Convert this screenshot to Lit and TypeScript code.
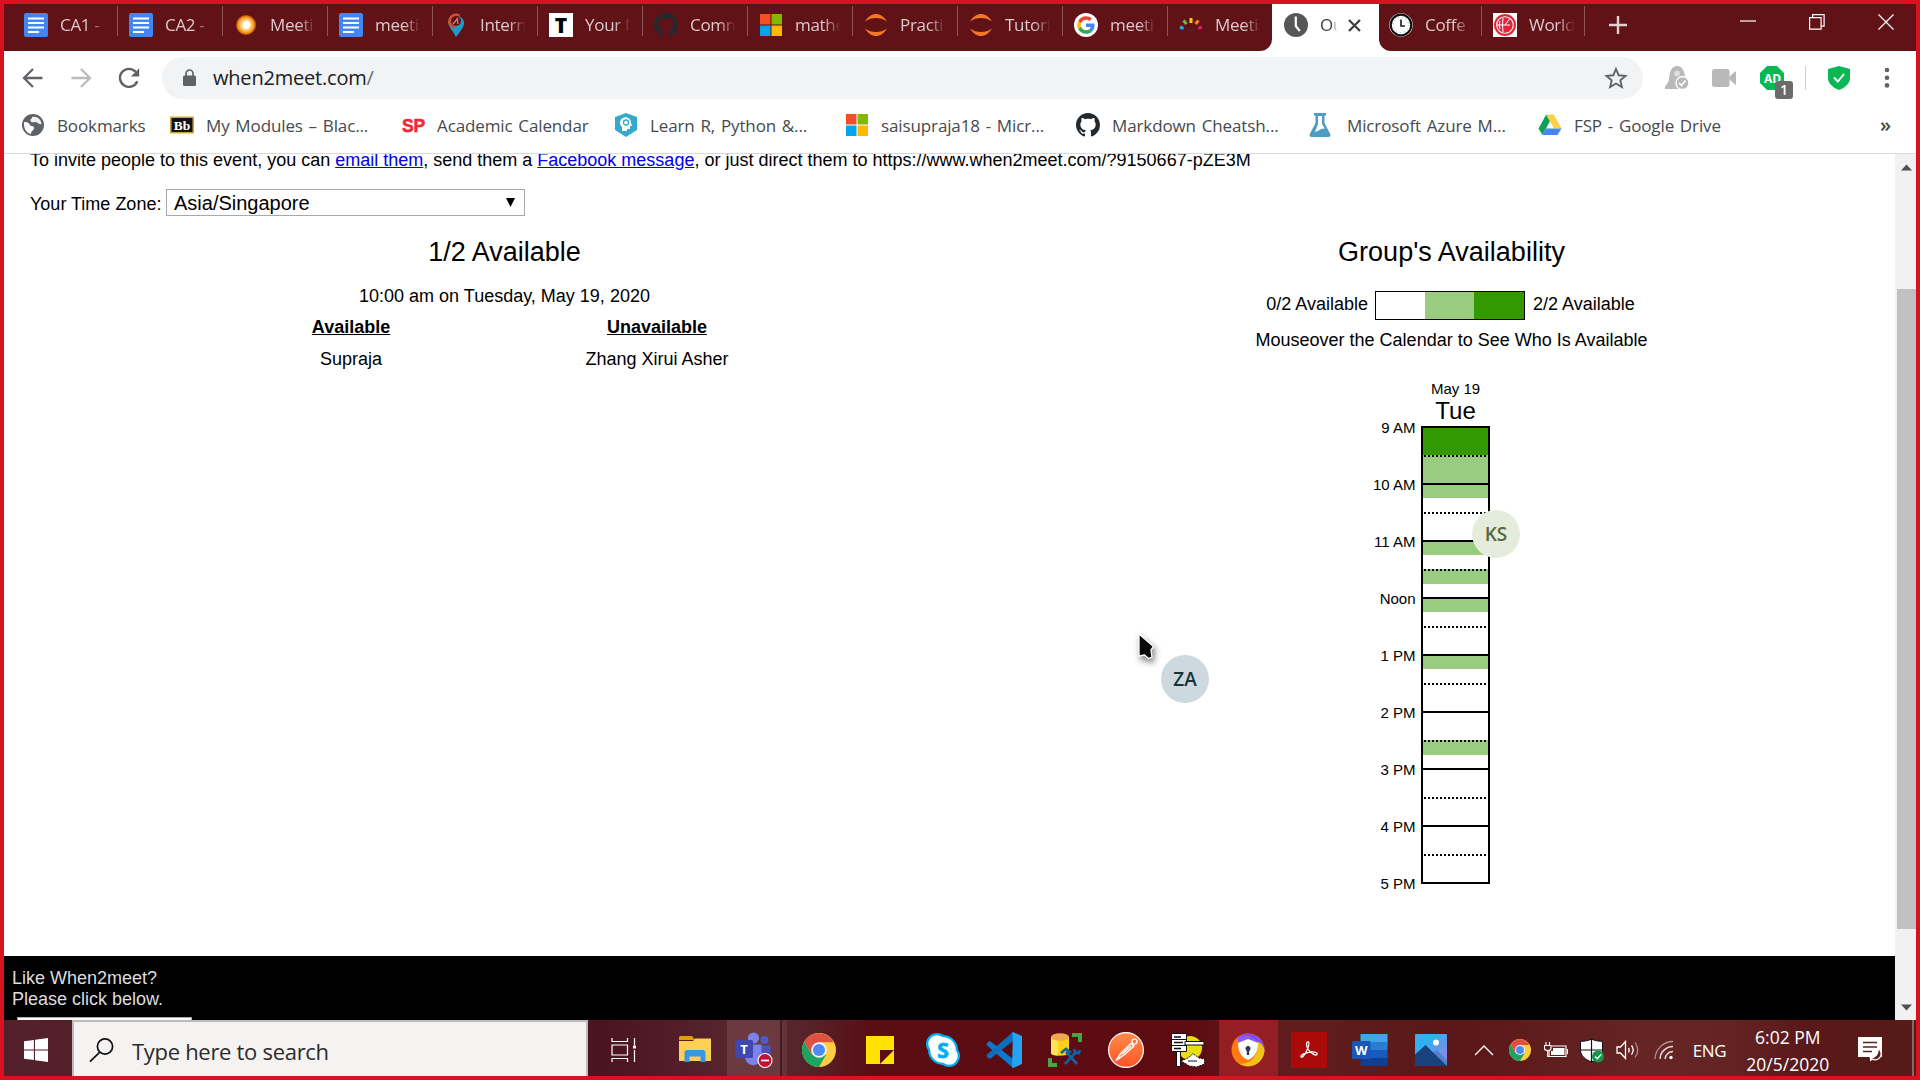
import { LitElement, html, css, svg, TemplateResult } from "lit";
import { customElement } from "lit/decorators.js";
import { classMap } from "lit/directives/class-map.js";

const icon = (w: number, h: number, box: string, body: unknown) =>
  html`<svg width=${w} height=${h} viewBox=${box} fill="none" aria-hidden="true">${body}</svg>`;

/* ---------- site icons ---------- */
const docs = () => icon(24, 24, "0 0 24 24", svg`
  <rect width="24" height="24" rx="2" fill="#4285f4"/>
  <path d="M4 5.500h16M4 10h16M4 14.500h16M4 19h11" stroke="#fff" stroke-width="2.200"/>`);
const orb = () => icon(24, 24, "0 0 24 24", svg`
  <defs><radialGradient id="orb"><stop offset="0" stop-color="#fff"/><stop offset=".35" stop-color="#ffe9bd"/><stop offset=".75" stop-color="#f9a11c"/><stop offset="1" stop-color="#b5480f"/></radialGradient></defs>
  <circle cx="12" cy="12" r="10" fill="url(#orb)"/>
  <path d="M9 10l5-3 3 5-3 4-5-1z" fill="#fff" opacity=".75"/>`);
const pin = () => icon(24, 24, "0 0 24 24", svg`
  <path d="M4 8.500a8.500 8.500 0 0 1 16 0c1 5-4 10-8 15.500C9 18 4 13 4 8.500z" fill="#1c9bc9"/>
  <path d="M4 9a8.300 8.300 0 0 1 12-7.600L10 16c-3-2-6-4-6-7z" fill="#c2543d"/>
  <circle cx="12" cy="8" r="5" fill="#611217"/><path d="M9 11l5-6M13 5l1 6" stroke="#d2826b" stroke-width="1.300"/>`);
const letterT = () => icon(24, 24, "0 0 24 24", svg`
  <rect width="24" height="24" fill="#fff"/>
  <text x="12" y="19.500" text-anchor="middle" font-family="Open Sans, sans-serif" font-weight="800" font-size="21" fill="#000">T</text>`);
const octocat = () => icon(24, 24, "0 0 16 16", svg`
  <path fill="#24292e" d="M8 0C3.580 0 0 3.580 0 8c0 3.540 2.290 6.530 5.470 7.590.4.070.55-.17.55-.38 0-.19-.01-.82-.01-1.490-2.010.37-2.530-.49-2.690-.94-.09-.23-.48-.94-.82-1.130-.28-.15-.68-.52-.01-.53.63-.01 1.080.58 1.230.82.72 1.210 1.870.87 2.330.66.07-.52.28-.87.51-1.070-1.780-.2-3.640-.89-3.640-3.950 0-.87.31-1.590.82-2.150-.08-.2-.36-1.020.08-2.120 0 0 .67-.21 2.200.82.64-.18 1.320-.27 2-.27s1.360.09 2 .27c1.530-1.040 2.200-.82 2.200-.82.44 1.100.16 1.920.08 2.120.51.56.82 1.270.82 2.150 0 3.070-1.870 3.750-3.650 3.950.29.25.54.73.54 1.480 0 1.070-.01 1.930-.01 2.200 0 .21.15.46.55.38A8.010 8.010 0 0 0 16 8c0-4.420-3.580-8-8-8z"/>`);
const msft = () => icon(24, 24, "0 0 24 24", svg`
  <path d="M1 1h10.500v10.500H1z" fill="#f25022"/><path d="M12.500 1H23v10.500H12.500z" fill="#7fba00"/>
  <path d="M1 12.500h10.500V23H1z" fill="#00a4ef"/><path d="M12.500 12.500H23V23H12.500z" fill="#ffb900"/>`);
const jupyter = () => icon(24, 24, "0 0 24 24", svg`
  <path d="M1 8.500C4 3.500 8 1 12 1s8 2.500 11 7.500C19.500 6 16 5 12 5S4.500 6 1 8.500z" fill="#f37726"/>
  <path d="M1 15.500C4.500 18 8 19 12 19s7.500-1 11-3.500C20 20.500 16 23 12 23s-8-2.500-11-7.500z" fill="#f37726"/>`);
const googleG = () => icon(24, 24, "0 0 24 24", svg`
  <circle cx="12" cy="12" r="12" fill="#fff"/>
  <g transform="translate(3.200 3.200) scale(.368)">
    <path fill="#EA4335" d="M24 9.500c3.540 0 6.710 1.220 9.210 3.600l6.850-6.850C35.900 2.380 30.470 0 24 0 14.620 0 6.510 5.380 2.560 13.220l7.980 6.190C12.430 13.720 17.740 9.500 24 9.500z"/>
    <path fill="#4285F4" d="M46.980 24.550c0-1.570-.15-3.090-.38-4.550H24v9.020h12.940c-.58 2.960-2.260 5.480-4.780 7.180l7.730 6c4.510-4.180 7.090-10.360 7.090-17.650z"/>
    <path fill="#FBBC05" d="M10.530 28.590c-.48-1.450-.76-2.990-.76-4.590s.27-3.140.76-4.590l-7.980-6.190C.92 16.460 0 20.120 0 24s.92 7.540 2.560 10.780l7.970-6.190z"/>
    <path fill="#34A853" d="M24 48c6.480 0 11.930-2.130 15.890-5.810l-7.730-6c-2.150 1.450-4.920 2.300-8.160 2.300-6.260 0-11.570-4.220-13.470-9.910l-7.980 6.190C6.510 42.620 14.620 48 24 48z"/>
  </g>`);
const rays = () => icon(24, 24, "0 0 24 24", svg`
  <g stroke-width="3"><path d="M1 14l3.500 1.500" stroke="#29a9e0"/><path d="M4.500 7.500l3 3.500" stroke="#5bbf4a"/>
  <path d="M12 5v5" stroke="#f9c80e"/><path d="M19.500 7.500l-3 3.500" stroke="#f58220"/><path d="M23 14l-3.500 1.500" stroke="#e8175d"/></g>
  <path d="M10 16l2 2 2-2" stroke="#43302a" stroke-width="1.200"/>`);
const clockSolid = () => icon(24, 24, "0 0 24 24", svg`
  <circle cx="12" cy="12" r="12" fill="#555759"/><path d="M11.800 3.500V13l4 5" stroke="#fff" stroke-width="2.200"/>`);
const clockRing = () => icon(24, 24, "0 0 24 24", svg`
  <circle cx="12" cy="12" r="11.800" fill="#fff"/><circle cx="12" cy="12" r="10.300" stroke="#111" stroke-width="2.200"/>
  <circle cx="12" cy="12" r="7.500" stroke="#999" stroke-width="1" stroke-dasharray="1 3"/><path d="M12 6.500V13h4" stroke="#222" stroke-width="1.700"/>`);
const worldClock = () => icon(24, 24, "0 0 24 24", svg`
  <rect width="24" height="24" fill="#fff"/><circle cx="12" cy="12" r="11" fill="#e2253b"/>
  <circle cx="12" cy="12" r="8.300" stroke="#fff" stroke-width="1.100"/><path d="M12 12l4.500-6M12 12h5M7 8q-1.500 4 0 8M10 5q-1 7 0 14M4 12h8" stroke="#fff" stroke-width="1"/>`);
const globe = () => icon(24, 24, "0 0 24 24", svg`
  <circle cx="12" cy="12" r="11" fill="#5f6368"/>
  <path d="M3 9c4 0 5 1 6 3s4 0 4 3-3 2-3 6C5 20 2.500 15 3 9z" fill="#fff"/><path d="M11 4c5-1 9 2 9.500 7-3 1-4-2-6-2s-4 1-5-1 2-2 1.500-4z" fill="#fff" opacity=".9"/>`);
const bb = () => icon(24, 24, "0 0 24 24", svg`
  <rect x=".8" y="4.300" width="22.400" height="15.400" fill="#111" stroke="#caa33a" stroke-width="1.500"/>
  <text x="12" y="16.800" text-anchor="middle" font-family="Liberation Serif, serif" font-weight="700" font-size="13.500" fill="#fff">Bb</text>`);
const sp = () => icon(24, 24, "0 0 24 24", svg`
  <text x="12.500" y="18.500" text-anchor="middle" font-family="Liberation Sans, sans-serif" font-weight="700" font-size="18" textLength="23" lengthAdjust="spacingAndGlyphs" fill="#ee2a3b" stroke="#ee2a3b" stroke-width=".6">SP</text>`);
const hexHead = () => icon(24, 24, "0 0 24 24", svg`
  <path d="M12 0l11 4v13l-11 7L1 17V4z" fill="#33aacd"/>
  <path d="M8 18v-4a5.500 5.500 0 1 1 9-4l1 3h-2v3h-3v2z" fill="#fff"/><circle cx="12" cy="9.500" r="2.500" stroke="#33aacd" stroke-width="1.300"/>`);
const flask = () => icon(28, 24, "0 0 28 24", svg`
  <path d="M7 0h12v2.500h-1.500V10L23.500 21.500q0 2.500-2 2.500H4.500q-2 0-2-2.500L8.500 10V2.500H7z" fill="#4c9cc4"/>
  <path d="M11 3h4v8l3 5c-3-2-6 2-10 3l3-8z" fill="#fff"/>`);
const drive = () => icon(24, 24, "0 0 24 24", svg`
  <path d="M8.200 1.500L12 8 4.500 22 .5 15.500z" fill="#11a05b"/><path d="M8.200 1.500h7.600L23.500 15.500H16z" fill="#ffcf48"/>
  <path d="M8 15.500h15.500L19.500 22h-15z" fill="#4486f4"/>`);

/* ---------- toolbar icons ---------- */
const arrow = (color: string, flip: boolean) => icon(24, 24, "0 0 24 24", svg`
  <g transform=${flip ? "translate(24 0) scale(-1 1)" : ""}><path d="M21.500 12H3.500M12 3L3 12l9 9" stroke=${color} stroke-width="2.300"/></g>`);
const reload = () => icon(24, 24, "0 0 24 24", svg`
  <path d="M20.300 15.300A9 9 0 1 1 18.800 6" stroke="#5f6368" stroke-width="2.400"/><path d="M22.200 2.200v8.300h-8.300z" fill="#5f6368"/>`);
const lock = () => icon(13, 18, "0 0 13 18", svg`
  <path d="M3 7V4.500a3.500 3.500 0 0 1 7 0V7" stroke="#5f6368" stroke-width="1.700"/><rect y="6.500" width="13" height="10.500" rx="1.500" fill="#5f6368"/>`);
const star = () => icon(24, 24, "0 0 24 24", svg`
  <path d="M12 3l2.700 6.300 6.800.6-5.200 4.500 1.600 6.700L12 17.500l-5.900 3.600 1.600-6.700-5.200-4.500 6.800-.6z" stroke="#5f6368" stroke-width="1.900"/>`);
const bellMuted = () => icon(26, 26, "0 0 26 26", svg`
  <path d="M1 22.500c0-3 3-3 4-8C5.500 6 8 1 13 1s7.500 5 8 10l-4 13H1z" fill="#b9b9b9"/><circle cx="13" cy="8.500" r="3" fill="#fff" opacity=".5"/>
  <circle cx="18.500" cy="18" r="6.500" fill="#b9b9b9" stroke="#fff" stroke-width="1.300"/><path d="M15 18l2.500 2.500 4-5" stroke="#fff" stroke-width="1.600"/>`);
const camera = () => icon(24, 20, "0 0 24 20", svg`
  <rect y="1" width="17.500" height="18" rx="2.500" fill="#b9b9b9"/><path d="M17 9l6-5.500h1v13h-1L17 11z" fill="#b9b9b9"/>`);
const abp = () => icon(24, 24, "0 0 24 24", svg`
  <path d="M7 0h10l7 7v10l-7 7H7l-7-7V7z" fill="#0bb753"/>
  <text x="12.500" y="16.500" text-anchor="middle" font-family="Open Sans, sans-serif" font-weight="700" font-size="12" fill="#fff">AD</text>`);
const shield = () => icon(22, 24, "0 0 22 24", svg`
  <path d="M11 0l11 3v9c0 6-6 10-11 12C6 22 0 18 0 12V3z" fill="#0bb753"/><path d="M6 11.500l3.800 4L16 8" stroke="#fff" stroke-width="1.900"/>`);
const dots = () => icon(6, 22, "0 0 6 22", svg`
  <g fill="#5f6368"><circle cx="3" cy="3" r="2.300"/><circle cx="3" cy="10.700" r="2.300"/><circle cx="3" cy="18.400" r="2.300"/></g>`);

/* ---------- taskbar icons ---------- */
const windowsLogo = () => icon(24, 24, "0 0 24 24", svg`
  <path d="M0 3.300L9.900 2v9.400H0zM11 1.800L24 0v11.400H11zM0 12.600h9.900V22L0 20.700zM11 12.600h13V24l-13-1.800z" fill="#fff"/>`);
const magnifier = () => icon(25, 24, "0 0 25 24", svg`
  <circle cx="16" cy="8.500" r="7.600" stroke="#111" stroke-width="1.700"/><path d="M10.800 14.200L1 23.600" stroke="#111" stroke-width="1.700"/>`);
const taskView = () => icon(26, 24, "0 0 26 24", svg`
  <path d="M1 0v3.500h15.500V0M1 24v-3.500h15.500V24M1 7h15.500v10H1zM23.500 0v7M23.500 12v12" stroke="#fff" stroke-width="1.200"/><rect x="22" y="7.500" width="3" height="3" fill="#fff"/>`);
const folder = () => icon(32, 28, "0 0 32 28", svg`
  <path d="M0 1.500Q0 0 1.500 0H13l3 4H0z" fill="#e0a000"/><path d="M0 5h14l2-2.500h16V25H0z" fill="#fdcf55"/>
  <path d="M5.500 26V17q0-3 3-3h15q3 0 3 3v9h-5v-5.500H10.500V26z" fill="#3a96dd"/>`);
const teams = () => icon(38, 36, "0 0 38 36", svg`
  <circle cx="29.500" cy="8" r="4" fill="#5059c9"/><path d="M24 13.500h11.500V23a6 6 0 0 1-6 6H24z" fill="#4b53bc"/>
  <circle cx="18.500" cy="6" r="5.600" fill="#7b83eb"/><path d="M10 12.500h16.500V25a8.200 8.200 0 0 1-16.500 0z" fill="#7b83eb"/>
  <rect y="8" width="18" height="18" rx="1.500" fill="#4048b0"/>
  <text x="9" y="21.500" text-anchor="middle" font-family="Open Sans, sans-serif" font-weight="700" font-size="13" fill="#fff">T</text>
  <circle cx="30" cy="28.500" r="7" fill="#c50f35" stroke="#fff" stroke-width="1.100"/><path d="M26 28.500h8" stroke="#fff" stroke-width="1.700"/>`);
const chrome = (s: number) => icon(s, s, "0 0 48 48", svg`
  <circle cx="24" cy="24" r="24" fill="#ffcd40"/>
  <path d="M3.200 12A24 24 0 0 0 24 48l10.400-18L24 33 13.600 30z" fill="#1da362"/>
  <path d="M3.200 12L13.600 30 24 24V13h20.800A24 24 0 0 0 3.200 12z" fill="#dd5144"/>
  <circle cx="24" cy="24" r="11" fill="#f4f4f4"/><circle cx="24" cy="24" r="8.600" fill="#4c8bf5"/>`);
const sticky = () => icon(28, 28, "0 0 28 28", svg`
  <path d="M0 0h28v14H14v14H0z" fill="#ffe300"/><path d="M14 28L28 14v14z" fill="#ffe300"/>`);
const skype = () => icon(34, 34, "0 0 34 34", svg`
  <circle cx="11" cy="11" r="11" fill="#00aff0"/><circle cx="23" cy="23" r="11" fill="#00aff0"/><circle cx="17" cy="17" r="15" fill="#00aff0"/>
  <circle cx="11" cy="11" r="8.700" fill="#fff"/><circle cx="23" cy="23" r="8.700" fill="#fff"/><circle cx="17" cy="17" r="12.800" fill="#fff"/>
  <text x="17" y="24.500" text-anchor="middle" font-family="Open Sans, sans-serif" font-weight="700" font-size="21" fill="#00aff0" stroke="#00aff0" stroke-width=".8">S</text>`);
const vscode = () => icon(36, 36, "0 0 36 36", svg`
  <path d="M1 11l3-2 23 18v9L.5 13z" fill="#0b79cc"/><path d="M1 25l3 2 23-18V0L.5 23z" fill="#0a70bd"/>
  <path d="M27 0l9 4v28l-9 4-1-1z" fill="#25a3f3"/><path d="M27 0l-1.500 1L27 9z" fill="#1587d4"/>`);
const database = () => icon(34, 34, "0 0 34 34", svg`
  <path d="M3 4v16c0 3.500 18 3.500 18 0V4z" fill="#fcd116"/><path d="M3 4v16c0 1.500 3 2.500 7 2.600V4z" fill="#ffe25c"/><ellipse cx="12" cy="4" rx="9" ry="3.800" fill="#f0a64e"/>
  <path d="M24 0h10v9h-4V4h-6z" fill="#46a546"/><path d="M0 25h4v5h5v4H0z" fill="#46a546"/>
  <path d="M17 31l12-13M18 19l11 12M13 20l5-4 4 3-3 3M26 16l1 4h4l1-3" stroke="#0e62a8" stroke-width="2.600"/>`);
const postman = () => icon(36, 36, "0 0 36 36", svg`
  <defs><linearGradient id="pm" x2="0" y2="1"><stop stop-color="#ff8b48"/><stop offset="1" stop-color="#ff5428"/></linearGradient></defs>
  <circle cx="18" cy="18" r="17.400" fill="url(#pm)" stroke="#fff" stroke-width="1.200"/>
  <path d="M13 21l10-9.500 3 2.500-10 9-8 5.500z" fill="#ff8a60" stroke="#fff" stroke-width="1.400"/><path d="M14 22l9-8" stroke="#fff" stroke-width="1.200"/><circle cx="26.500" cy="9.500" r="2.500" stroke="#fff" stroke-width="1.200"/>`);
const flowchart = () => icon(34, 34, "0 0 34 34", svg`
  <circle cx="19" cy="15" r="12" fill="#e6df12"/>
  <path d="M.5.5h15v18H.5zM.5 6.500h15M.5 12.500h15" fill="#fff" stroke="#111"/><path d="M3 4h7M3 9.500h9M3 15.500h7" stroke="#111" stroke-width="1.400"/>
  <path d="M14 8.500h19v3.500H14zM5.500 18.500h4V33.500h-4z" fill="#fff" stroke="#111"/><path d="M10 28l7-3 5-4.500 6 4.500 5.500 1v5l-8 3-7-1z" fill="#fff" stroke="#111" stroke-dasharray="2 1"/><path d="M17 28h9" stroke="#111"/>`);
const vault = () => icon(34, 34, "0 0 34 34", svg`
  <circle cx="17" cy="17" r="16.500" fill="#ff7b12"/><path d="M6 5a16.500 16.500 0 0 1 27.500 13L27 9 17 3z" fill="#7b4dff"/>
  <path d="M33.500 18A16.500 16.500 0 0 1 8 30.500C20 32 27 24 27 9c4 1 6 5 6.500 9z" fill="#f0c419"/><path d="M6 5c4-3 15-2 21 4l-19 1z" fill="#8d5cff"/>
  <path d="M17 6l10 4c0 8-3 14-10 17C10 24 7 18 7 10z" fill="#fff"/><circle cx="17" cy="15.500" r="2.500" fill="#2b3a55"/><path d="M17 15v7" stroke="#2b3a55" stroke-width="2.400"/>`);
const acrobat = () => icon(36, 36, "0 0 36 36", svg`
  <rect width="36" height="36" fill="#a90a0a"/>
  <path d="M10 24.500c0-2 6-4 10-4.500s7 1 6 2.500-6-.5-9-5.500-1-8 .5-7-1 8-3.500 12-4 3.500-4 2.500z" stroke="#fff" stroke-width="1.300"/>`);
const word = () => icon(36, 32, "0 0 36 32", svg`
  <rect x="8.500" width="27" height="9" fill="#41a5ee"/><rect x="8.500" y="8" width="27" height="8" fill="#2b7cd3"/><rect x="8.500" y="16" width="27" height="8" fill="#185abd"/><rect x="8.500" y="24" width="27" height="8" fill="#103f91"/>
  <rect y="7" width="18.500" height="18" rx="1.500" fill="#1a56b8"/>
  <text x="9.200" y="20.800" text-anchor="middle" font-family="Open Sans, sans-serif" font-weight="700" font-size="13" fill="#fff">W</text>`);
const photos = () => icon(32, 32, "0 0 32 32", svg`
  <defs><linearGradient id="sky" x2="1" y2="1"><stop offset=".3" stop-color="#2fb0f3"/><stop offset="1" stop-color="#a57be0"/></linearGradient></defs>
  <rect width="32" height="32" rx="1" fill="url(#sky)"/><path d="M14 32V24l7.500-8.500L32 26v6z" fill="#5580cf"/><path d="M0 20.500L10.500 11 32 32H0z" fill="#17427c"/><circle cx="21" cy="8.500" r="3" fill="#fff"/>`);

/* ---------- tray icons ---------- */
const chevronUp = () => icon(20, 12, "0 0 20 12", svg`<path d="M1 11l9-9 9 9" stroke="#fff" stroke-width="1.400"/>`);
const battery = () => icon(24, 18, "0 0 24 18", svg`
  <path d="M7.500 5H22V15.500H5v-6" stroke="#fff" stroke-width="1.200"/><path d="M9 7h11.500v7H7V10h2z" fill="#fff"/><path d="M23.500 8v5" stroke="#fff"/>
  <path d="M2 1v3M5.500 1v3M.5 4.500h6.500v3q0 2-3.200 2t-3.300-2zM3.700 9.500V15.500H6" stroke="#fff" stroke-width="1.100"/>`);
const defender = () => icon(24, 25, "0 0 24 25", svg`
  <path d="M11.500 1c3 1.700 7 2.300 11 2.300V12c0 6-5 9.500-11 12C5.500 21.500.5 18 .5 12V3.300C4.500 3.300 8.500 2.700 11.500 1z" fill="#fff" stroke="#111"/>
  <path d="M11.500 1v23M1 12h21.500" stroke="#111" stroke-width="1.200"/><circle cx="18" cy="18.500" r="6" fill="#15944a"/><path d="M15 18.500l2.300 2.300 4-4.500" stroke="#fff" stroke-width="1.300"/>`);
const speaker = () => icon(24, 20, "0 0 24 20", svg`
  <path d="M1 7h3.500l5-5.500v17L4.500 13H1z" stroke="#fff" stroke-width="1.300"/><path d="M12.500 8q1.500 2 0 4.500M15.500 5.500q3.500 4.500 0 9" stroke="#fff" stroke-width="1.300"/><path d="M19 2.500q5.500 7.500 0 15" stroke="#fff" stroke-width="1.200" opacity=".5"/>`);
const wifi = () => icon(20, 20, "0 0 20 20", svg`
  <path d="M1 19A18 18 0 0 1 19 1.500" stroke="#fff" stroke-width="1.300" opacity=".5"/><path d="M6 19A13 13 0 0 1 19 6.500M11 19a8 8 0 0 1 8-7.500" stroke="#fff" stroke-width="1.400" opacity=".85"/><circle cx="17" cy="17.500" r="1.700" fill="#fff"/>`);
const notification = () => icon(26, 26, "0 0 26 26", svg`
  <path d="M0 0h24v20h-6l-6 4.500V20H0z" fill="#fff"/><path d="M5 5.500h14M5 10h14M5 14.500h9" stroke="#5e2020" stroke-width="1.400"/>
  <path d="M20 11.500a6 6 0 1 1-7.500 9c4 .5 8-3 7.500-9z" fill="#5e2020" stroke="#fff" stroke-width="1.300"/>`);

interface Tab { icon: () => TemplateResult; title: string }
const TABS: Tab[] = [
  { icon: docs, title: "CA1 -" }, { icon: docs, title: "CA2 -" }, { icon: orb, title: "Meeti" },
  { icon: docs, title: "meeti" }, { icon: pin, title: "Intern" }, { icon: letterT, title: "Your N" },
  { icon: octocat, title: "Comm" }, { icon: msft, title: "mathe" }, { icon: jupyter, title: "Practi" },
  { icon: jupyter, title: "Tutori" }, { icon: googleG, title: "meeti" }, { icon: rays, title: "Meeti" },
];
const RIGHT_TABS: Tab[] = [{ icon: clockRing, title: "Coffe" }, { icon: worldClock, title: "World" }];
const BOOKMARKS: Tab[] = [
  { icon: globe, title: "Bookmarks" }, { icon: bb, title: "My Modules – Blac..." }, { icon: sp, title: "Academic Calendar" },
  { icon: hexHead, title: "Learn R, Python &..." }, { icon: msft, title: "saisupraja18 - Micr..." },
  { icon: octocat, title: "Markdown Cheatsh..." }, { icon: flask, title: "Microsoft Azure M..." }, { icon: drive, title: "FSP - Google Drive" },
];
/* People available in each quarter hour, one row per hour. */
const HOURS: { label: string; slots: number[] }[] = [
  { label: "9 AM", slots: [2, 2, 1, 1] }, { label: "10 AM", slots: [1, 0, 0, 0] }, { label: "11 AM", slots: [1, 0, 1, 0] },
  { label: "Noon", slots: [1, 0, 0, 0] }, { label: "1 PM", slots: [1, 0, 0, 0] }, { label: "2 PM", slots: [0, 0, 1, 0] },
  { label: "3 PM", slots: [0, 0, 0, 0] }, { label: "4 PM", slots: [0, 0, 0, 0] },
];
const APPS = [() => chrome(34), sticky, skype, vscode, database, postman, flowchart, vault, acrobat, word, photos];

@customElement("browser-chrome")
class BrowserChrome extends LitElement {
  static styles = css`
    :host { display: block; font-family: "Open Sans", "Noto Sans", sans-serif; }
    svg { display: block; flex: none; }
    .strip { display: flex; height: 47px; background: #fff; }
    .group { display: flex; background: #611217; color: #d9cbcc; }
    .left { width: 1268px; padding-left: 9px; box-sizing: border-box; border-bottom-right-radius: 12px; }
    .right { flex: 1; border-bottom-left-radius: 12px; }
    .tab { display: flex; flex: none; width: 105px; height: 47px; padding: 9px 0 0 11px; box-sizing: border-box; gap: 12px; position: relative; }
    .left .tab:last-child { width: 104px; }
    .right .tab { width: 103px; padding-left: 10px; }
    .right .tab + .tab { padding-left: 11px; }
    .tab::after { content: ""; position: absolute; right: 0; top: 2px; width: 1px; height: 30px; background: #8d5457; }
    .left .tab:last-child::after { display: none; }
    .name { width: 47px; overflow: hidden; white-space: nowrap; font-size: 17px; line-height: 24px; letter-spacing: -.3px;
      -webkit-mask-image: linear-gradient(90deg, #000 62%, transparent 97%); mask-image: linear-gradient(90deg, #000 62%, transparent 97%); }
    .active { width: 107px; display: flex; padding: 9px 0 0 12px; box-sizing: border-box; gap: 12px; color: #3c4043; }
    .active .name { width: 18px; }
    .cross { margin: 6px 0 0 -2px; }
    .plus { margin: 12px 0 0 24px; }
    .winbtns { display: flex; margin-left: auto; gap: 53px; padding: 10px 22px 0 0; }
    .bar { display: flex; align-items: center; height: 54px; padding-left: 17px; box-sizing: border-box; }
    .nav { display: flex; gap: 24px; }
    .pill { display: flex; align-items: center; width: 1481px; height: 42px; margin-left: 21px; border-radius: 21px; background: #f1f3f4; padding: 0 15px 0 21px; box-sizing: border-box; }
    .url { margin-left: 17px; font-size: 20px; line-height: 42px; letter-spacing: -.2px; color: #202124; flex: 1; }
    .slash { color: #6b6f73; }
    .ext { display: flex; align-items: center; margin-left: 21px; flex: 1; }
    .cam { margin-left: 22px; }
    .abp { margin-left: 24px; position: relative; }
    .badge { position: absolute; left: 15px; top: 15px; width: 18px; height: 18px; border-radius: 3px; background: #6b6b6b; color: #fff; font: 600 14px/18px "Open Sans", sans-serif; text-align: center; }
    .sep { width: 1px; height: 24px; background: #ccced1; margin-left: 21px; }
    .shield { margin-left: 22px; }
    .dots { margin-left: 34px; }
    .marks { display: grid; grid-template-columns: 149px 231px 213px 231px 231px 231px 231px 342px 20px; height: 49px; padding-left: 17px; align-items: center; border-bottom: 1px solid #d8dadc; box-sizing: border-box; padding-bottom: 8px; font-size: 17px; color: #46494d; }
    .mark { display: flex; align-items: center; gap: 12px; white-space: nowrap; letter-spacing: -.12px; word-spacing: 1.500px; }
    .more { font-size: 20px; line-height: 20px; font-weight: 600; }
  `;
  private tab(t: Tab) {
    return html`<div class="tab">${t.icon()}<span class="name">${t.title}</span></div>`;
  }
  render() {
    return html`
      <div class="strip">
        <div class="group left">${TABS.map((t) => this.tab(t))}</div>
        <div class="active">${clockSolid()}<span class="name">Ou</span>
          <svg class="cross" width="13" height="13" viewBox="0 0 13 13"><path d="M1 1l11 11M12 1L1 12" stroke="#3c4043" stroke-width="2.300"/></svg>
        </div>
        <div class="group right">
          ${RIGHT_TABS.map((t) => this.tab(t))}
          <svg class="plus" width="18" height="18" viewBox="0 0 18 18"><path d="M9 0v18M0 9h18" stroke="#e0d2d3" stroke-width="2.400"/></svg>
          <div class="winbtns">
            ${icon(16, 16, "0 0 16 16", svg`<path d="M0 7h16" stroke="#fff" stroke-width="1.200"/>`)}
            ${icon(16, 16, "0 0 16 16", svg`<path d="M.6 3.600h11.500v11.500H.6zM3.600 3.600V.6h11.500v11.500h-3" stroke="#fff" stroke-width="1.200"/>`)}
            ${icon(16, 16, "0 0 16 16", svg`<path d="M.5.5l15 15M15.500.5l-15 15" stroke="#fff" stroke-width="1.200"/>`)}
          </div>
        </div>
      </div>
      <div class="bar">
        <div class="nav">${arrow("#5f6368", false)}${arrow("#babcbe", true)}${reload()}</div>
        <div class="pill">${lock()}<span class="url">when2meet.com<span class="slash">/</span></span>${star()}</div>
        <div class="ext">
          ${bellMuted()}
          <div class="cam">${camera()}</div>
          <div class="abp">${abp()}<span class="badge">1</span></div>
          <div class="sep"></div>
          <div class="shield">${shield()}</div>
          <div class="dots">${dots()}</div>
        </div>
      </div>
      <div class="marks">
        ${BOOKMARKS.map((b) => html`<div class="mark">${b.icon()}<span>${b.title}</span></div>`)}
        <span class="more">»</span>
      </div>`;
  }
}

@customElement("meet-page")
class MeetPage extends LitElement {
  static styles = css`
    :host { display: flex; height: 866px; overflow: hidden; font: 18px/20px "Liberation Sans", Arial, sans-serif; color: #000; background: #fff; }
    .doc { width: 1891px; overflow: hidden; display: flex; flex-direction: column; }
    .body { height: 802px; flex: none; padding-left: 26px; box-sizing: border-box; overflow: hidden; }
    .invite { margin-top: -4px; white-space: nowrap; }
    a { color: #0000ee; text-decoration: underline; }
    .zone { display: flex; margin-top: 19px; height: 27px; }
    .zone label { padding-top: 5px; width: 136px; white-space: nowrap; }
    .select { width: 359px; height: 27px; border: 1px solid #a9a9a9; box-sizing: border-box; display: flex; justify-content: space-between; font-size: 20px; line-height: 26px; padding: 0 9px 0 7px; }
    .tri { margin-top: 8px; width: 9px; height: 9px; }
    .cols { display: grid; grid-template-columns: 947px 947px; width: 1894px; margin: 21px 0 0 1px; text-align: center; }
    h2 { margin: 0; font-weight: 400; font-size: 27px; line-height: 30px; }
    .date { margin-top: 19px; }
    .who { display: grid; grid-template-columns: 306px 306px; justify-content: center; row-gap: 12px; margin: 11px 1px 0 0; }
    .who b { text-decoration: underline; }
    .legend { display: flex; justify-content: center; gap: 8px; margin: 24px 2px 0 0; height: 29px; }
    .legend span { line-height: 26px; }
    .legend span:first-child { margin-right: -1px; }
    .scale { width: 150px; height: 29px; border: 1px solid #000; box-sizing: border-box; display: grid; grid-template-columns: 49px 49px 50px; }
    .hint { margin-top: 10px; }
    .cal { display: grid; grid-template-columns: 437.500px 69px; column-gap: 5.500px; margin-top: 30px; }
    .head { grid-column: 2; height: 46px; white-space: nowrap; }
    .day { font-size: 15px; line-height: 18px; }
    .dow { font-size: 24px; line-height: 26px; }
    .labels { text-align: right; font-size: 15px; line-height: 18px; margin-top: -7px; }
    .labels div { height: 57px; }
    .grid { border: solid #000; border-width: 0 2px 2px; height: 458px; box-sizing: border-box; }
    .hour { display: grid; height: 57px; grid-template-rows: 13px 14px 15px 13px; border-top: 2px solid #000; box-sizing: border-box; }
    .half { background-image: linear-gradient(90deg, transparent 1px, #000 1px, #000 3px, transparent 3px); background-size: 4px 2px; background-repeat: repeat-x; }
    .one { background-color: #99cc80; }
    .two { background-color: #339900; }
    .foot { height: 64px; background: #000; color: #ddd; padding: 12px 0 0 8px; box-sizing: border-box; line-height: 21px; }
    .button { width: 175px; height: 20px; margin: 7px 0 0 5px; background: #fff; border: 1px solid #aaa; box-sizing: border-box; }
    .scroll { width: 21px; background: #f1f1f1; display: flex; flex-direction: column; align-items: center; box-sizing: border-box; padding-left: 2px; }
    .thumb { width: 19px; height: 640px; margin-top: 118px; background: #c1c1c1; }
    .up { margin-top: 10px; width: 11px; height: 7px; }
    .down { margin: auto 0 9px; width: 11px; height: 7px; }
    svg { display: block; }
  `;
  render() {
    const fill = (n: number, half: boolean) => classMap({ one: n === 1, two: n === 2, half });
    return html`
      <div class="doc">
        <div class="body">
          <div class="invite">To invite people to this event, you can <a>email them</a>, send them a <a>Facebook message</a>, or just direct them to https://www.when2meet.com/?9150667-pZE3M</div>
          <div class="zone"><label>Your Time Zone:</label>
            <div class="select">Asia/Singapore<svg class="tri" viewBox="0 0 10 10"><path d="M0 0h10L5 10z"/></svg></div>
          </div>
          <div class="cols">
            <section>
              <h2>1/2 Available</h2>
              <div class="date">10:00 am on Tuesday, May 19, 2020</div>
              <div class="who"><b>Available</b><b>Unavailable</b><span>Supraja</span><span>Zhang Xirui Asher</span></div>
            </section>
            <section>
              <h2>Group's Availability</h2>
              <div class="legend"><span>0/2 Available</span>
                <div class="scale"><i></i><i class="one"></i><i class="two"></i></div>
                <span>2/2 Available</span></div>
              <div class="hint">Mouseover the Calendar to See Who Is Available</div>
              <div class="cal">
                <div class="head"><div class="day">May 19</div><div class="dow">Tue</div></div>
                <div class="labels">${HOURS.map((h) => html`<div>${h.label}</div>`)}<div>5 PM</div></div>
                <div class="grid">${HOURS.map((h) => html`<div class="hour">${h.slots.map((n, i) => html`<i class=${fill(n, i === 2)}></i>`)}</div>`)}</div>
              </div>
            </section>
          </div>
        </div>
        <div class="foot">Like When2meet?<br />Please click below.<div class="button"></div></div>
      </div>
      <div class="scroll">
        <svg class="up" viewBox="0 0 11 7"><path d="M0 6.500L5.500.5l5.500 6z" fill="#505050"/></svg>
        <div class="thumb"></div>
        <svg class="down" viewBox="0 0 11 7"><path d="M0 .5L5.500 6.500l5.500-6z" fill="#505050"/></svg>
      </div>`;
  }
}

@customElement("task-bar")
class TaskBar extends LitElement {
  static styles = css`
    :host { display: flex; height: 56px; font-family: "Open Sans", "Noto Sans", sans-serif; color: #fff;
      background: linear-gradient(90deg, #54202b 0, #4e1824 500px, #4a1420 600px, #592630 740px, #562429 800px, #5a0d13 870px, #5d0b11 1180px, #601d1e 1290px, #5c1a1b 1380px, #5c1718 1460px, #652524 1640px, #642424 1720px, #5a181a 1800px, #551b17 1912px); }
    svg { display: block; flex: none; }
    .start { width: 68px; padding: 18px 0 0 20px; box-sizing: border-box; }
    .search { width: 516px; border: 2px solid #bfbbbb; border-bottom: 0; background: #f5f2f2; box-sizing: border-box; display: flex; padding: 16px 0 0 15px; gap: 18px; }
    .search span { font-size: 22px; line-height: 30px; margin-top: -2px; letter-spacing: -.3px; color: #2b2b2b; }
    .apps { display: grid; grid-template-columns: 72px 67px 53px 8px repeat(11, 61.25px); }
    .app { display: flex; align-items: center; justify-content: center; padding-top: 4px; }
    .folder { padding-left: 3px; }
    .teams { background: #6c3940; }
    .edge { border-left: 2px solid #431c22; background: linear-gradient(90deg, #65333a 5px, transparent 5px); }
    .mid { padding-left: 3px; }
    .vault { background: #941e23; margin-left: 2px; padding-right: 1px; }
    .tray { display: flex; flex: 1; align-items: center; padding: 4px 2px 0 12px; box-sizing: border-box; }
    .tray > svg { margin-right: 13px; }
    .tray > svg:nth-of-type(1) { margin-right: 15px; }
    .tray > svg:nth-of-type(3), .tray > svg:nth-of-type(4) { margin-right: 12px; }
    .tray > svg:nth-of-type(5) { margin-right: 14px; }
    .lang { font-size: 17px; letter-spacing: -.4px; margin-left: 6px; width: 34px; }
    .clock { width: 100px; margin: 2px 0 0 11px; text-align: center; font-size: 17.500px; line-height: 27.500px; }
    .note { margin-left: 20px; }
    .desk { width: 2px; height: 56px; margin: -4px 0 0 auto; background: #8d6664; }
  `;
  render() {
    return html`
      <div class="start">${windowsLogo()}</div>
      <div class="search">${magnifier()}<span>Type here to search</span></div>
      <div class="apps">
        <div class="app">${taskView()}</div>
        <div class="app folder">${folder()}</div>
        <div class="app teams">${teams()}</div>
        <div class="edge"></div>
        ${APPS.map((a, i) => html`<div class=${classMap({ app: true, mid: i > 1 && i < 7, vault: a === vault })}>${a()}</div>`)}
      </div>
      <div class="tray">
        ${chevronUp()}${chrome(22)}${battery()}${defender()}${speaker()}${wifi()}
        <span class="lang">ENG</span>
        <div class="clock">6:02 PM<br />20/5/2020</div>
        <div class="note">${notification()}</div>
        <div class="desk"></div>
      </div>`;
  }
}

@customElement("app-root")
class AppRoot extends LitElement {
  static styles = css`
    :host { display: block; position: relative; width: 1920px; height: 1080px; box-sizing: border-box; border: 4px solid #d91221; overflow: hidden; background: #fff; }
    .avatar { position: absolute; width: 48px; height: 48px; border-radius: 50%; text-align: center; font: 600 19px/48px "Open Sans", "Noto Sans", sans-serif; }
    .ks { left: 1468px; top: 506px; background: #e5ecdc; color: #56693f; }
    .za { left: 1157px; top: 651px; background: #cdd9df; color: #14343a; }
    .cursor { position: absolute; left: 1132px; top: 627px; filter: drop-shadow(2px 4px 3px rgba(0, 0, 0, .5)); }
  `;
  render() {
    return html`
      <browser-chrome></browser-chrome>
      <meet-page></meet-page>
      <task-bar></task-bar>
      <svg class="cursor" width="22" height="32" viewBox="0 0 22 32"><path d="M3 3l14.500 12.500-2.500 3.500 1 7-3.500 1.500-4-3.500L3 25z" fill="#0a0a0a" stroke="#fff" stroke-width="1.300"/></svg>
      <div class="avatar za">ZA</div>
      <div class="avatar ks">KS</div>`;
  }
}
